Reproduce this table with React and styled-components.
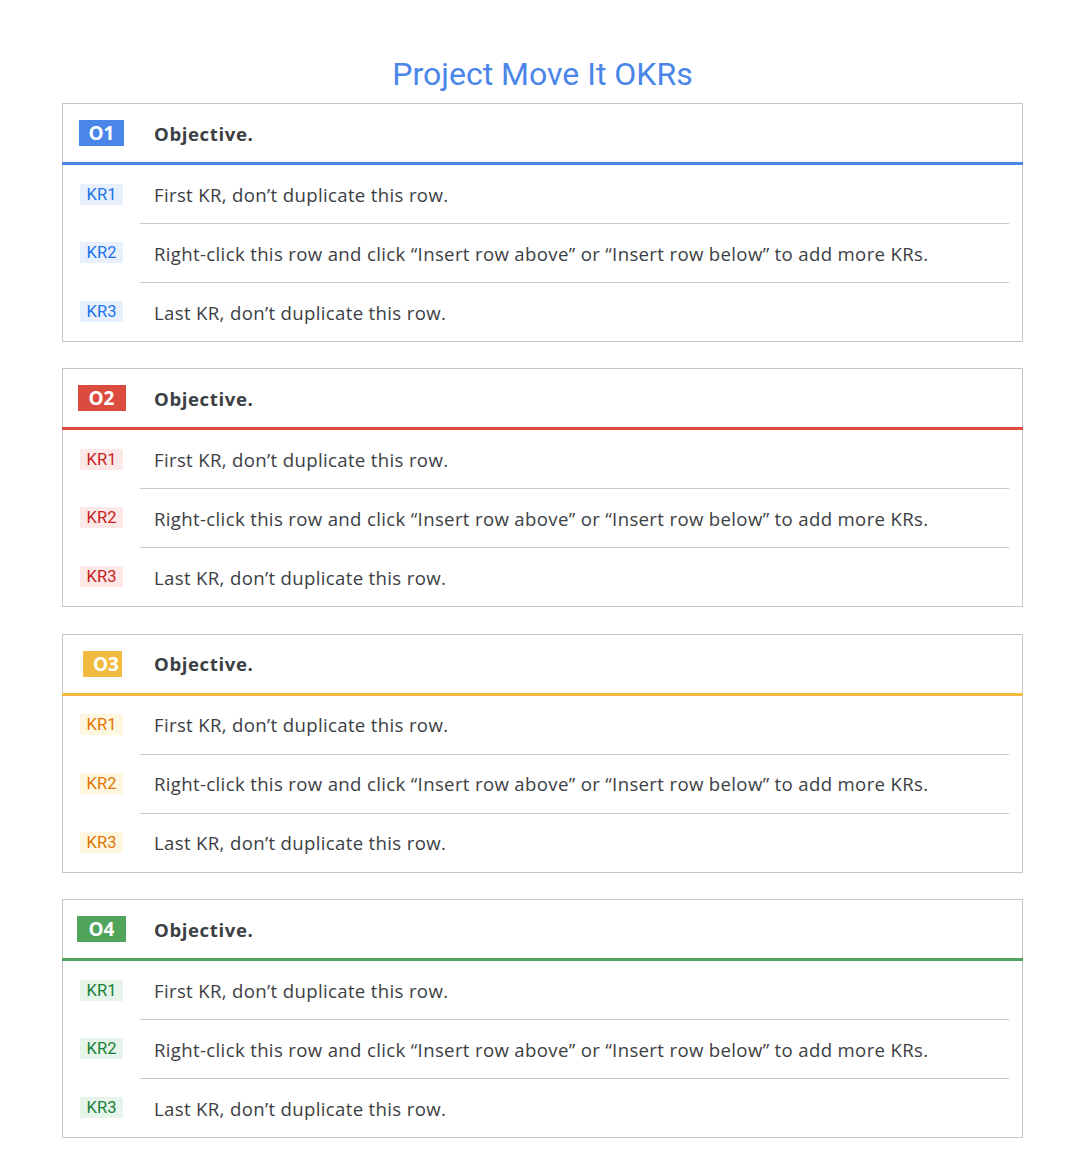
import React from "react";
import styled, { createGlobalStyle } from "styled-components";

const Global = createGlobalStyle`
  html, body { margin: 0; padding: 0; background: #ffffff; }
  body { font-family: "Open Sans", Roboto, "Liberation Sans", Arial, sans-serif; color: #3c4043; }
`;

const Page = styled.div`
  padding: 55px 61px 36px 62px;
  display: flex;
  flex-direction: column;
`;

const Title = styled.h1`
  margin: 0 0 10px;
  text-align: center;
  font-family: Roboto, "Liberation Sans", sans-serif;
  font-weight: 400;
  font-size: 32px;
  line-height: 38px;
  color: #4a86e8;
`;

const Stack = styled.div`
  display: flex;
  flex-direction: column;
  gap: 26.4px;
`;

const Card = styled.section`
  border: 1px solid #c6c6c6;
  background: #fff;
`;

const Header = styled.div`
  display: grid;
  grid-template-columns: 77px 1fr;
  align-items: center;
  height: 58px;
  border-bottom: 3px solid ${(p) => p.$accent};
  margin: 0 -1px 0 -1px;
  padding: 0 1px;
`;

const BadgeCell = styled.div`
  display: flex;
  justify-content: center;
  align-items: center;
`;

const OBadge = styled.div`
  width: ${(p) => p.$w}px;
  height: 26px;
  box-sizing: border-box;
  background: ${(p) => p.$accent};
  color: #fff;
  font-family: "Open Sans", Roboto, sans-serif;
  font-weight: 700;
  font-size: 19px;
  letter-spacing: 0px;
  line-height: 26px;
  display: flex;
  align-items: center;
  justify-content: ${(p) => (p.$indent ? "flex-start" : "center")};
  padding-left: ${(p) => p.$indent || 0}px;
  overflow: hidden;
  white-space: nowrap;
  transform: translateX(${(p) => p.$shift || 0}px);
`;

const ObjectiveText = styled.div`
  padding-left: 14px;
  font-weight: 700;
  font-size: 18.6px;
  letter-spacing: 0.6px;
  color: #3c4043;
`;

const KRRow = styled.div`
  display: grid;
  grid-template-columns: 77px 1fr;
  align-items: stretch;
  height: 58px;
  & + & > div:last-child {
    border-top: 1px solid #c8c8c8;
  }
  & + & {
    height: 59px;
  }
`;

const KRBadge = styled.div`
  min-width: 43px;
  height: 21px;
  padding: 0 2px;
  box-sizing: border-box;
  background: ${(p) => p.$bg};
  color: ${(p) => p.$fg};
  font-family: Roboto, "Open Sans", sans-serif;
  font-size: 16.5px;
  line-height: 21px;
  text-align: center;
`;

const KRText = styled.div`
  margin-right: 13px;
  padding-left: 14px;
  display: flex;
  align-items: center;
  font-size: 18.6px;
  letter-spacing: 0.34px;
  color: #3c4043;
`;

const themes = [
  { id: "O1", accent: "#4a86e8", bg: "#e8f0fe", fg: "#1a73e8", w: 45 },
  { id: "O2", accent: "#dc4c3e", bg: "#fce8e6", fg: "#c5221f", w: 48 },
  { id: "O3", accent: "#f1bb3f", bg: "#fef7e0", fg: "#e37400", w: 39, indent: 10, shift: 1 },
  { id: "O4", accent: "#50a45c", bg: "#e6f4ea", fg: "#188038", w: 49 },
];

const krs = [
  "First KR, don\u2019t duplicate this row.",
  "Right-click this row and click \u201cInsert row above\u201d or \u201cInsert row below\u201d to add more KRs.",
  "Last KR, don\u2019t duplicate this row.",
];

export default function App() {
  return (
    <>
      <Global />
      <Page>
        <Title>Project Move It OKRs</Title>
        <Stack>
          {themes.map((t) => (
            <Card key={t.id}>
              <Header $accent={t.accent}>
                <BadgeCell>
                  <OBadge $accent={t.accent} $w={t.w} $indent={t.indent} $shift={t.shift}>
                    {t.id}
                  </OBadge>
                </BadgeCell>
                <ObjectiveText>Objective.</ObjectiveText>
              </Header>
              {krs.map((text, i) => (
                <KRRow key={i}>
                  <BadgeCell>
                    <KRBadge $bg={t.bg} $fg={t.fg}>KR{i + 1}</KRBadge>
                  </BadgeCell>
                  <KRText>{text}</KRText>
                </KRRow>
              ))}
            </Card>
          ))}
        </Stack>
      </Page>
    </>
  );
}
